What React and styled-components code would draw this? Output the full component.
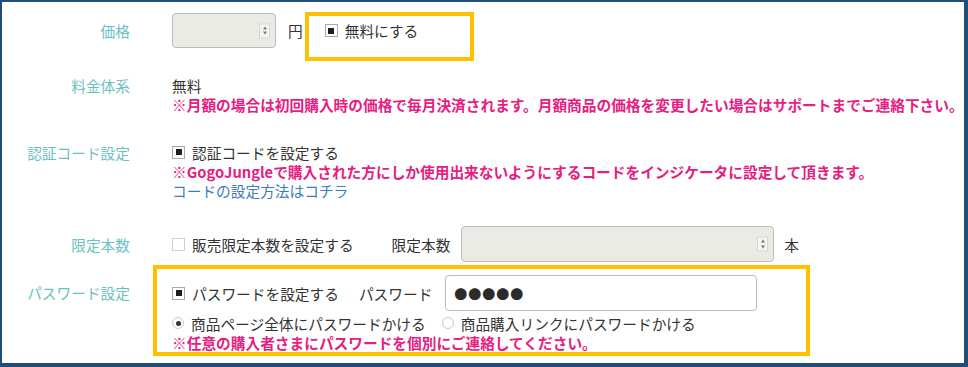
import styled, { createGlobalStyle } from "styled-components";

const GlobalStyle = createGlobalStyle`
  html, body {
    margin: 0;
    padding: 0;
    background: #fff;
  }
  body {
    font-family: "Noto Sans CJK JP", "Noto Sans", sans-serif;
    font-size: 14.7px;
    color: #333;
  }
`;

const Frame = styled.div`
  width: 968px;
  height: 367px;
  box-sizing: border-box;
  border-style: solid;
  border-color: #1f4e79;
  border-width: 2px 4px 4px 2px;
  padding: 10px 0 0 18px;
  display: flex;
  flex-direction: column;
  overflow: hidden;
`;

const Row = styled.div`
  display: grid;
  grid-template-columns: 110px 1fr;
  column-gap: 42px;
  align-items: start;
  margin-top: ${(p) => p.$mt || 0}px;
`;

const Label = styled.div`
  text-align: right;
  color: #6dbfc4;
  line-height: 19px;
  padding-top: ${(p) => p.$pt || 0}px;
  white-space: nowrap;
`;

const Content = styled.div`
  display: flex;
  flex-direction: column;
  line-height: 19px;
  white-space: nowrap;
`;

const Inline = styled.div`
  display: flex;
  align-items: ${(p) => p.$align || "center"};
  line-height: ${(p) => p.$lh || 19}px;
`;

const NumberBox = styled.div`
  position: relative;
  width: ${(p) => p.$w}px;
  height: ${(p) => p.$h}px;
  box-sizing: border-box;
  background: #ebebe5;
  border: 1px solid #bdbdb8;
  border-radius: 4px;
  margin-top: ${(p) => p.$mt || 0}px;
  margin-left: ${(p) => p.$ml || 0}px;
`;

const Spinner = styled.span`
  position: absolute;
  right: 5px;
  top: 50%;
  transform: translateY(-50%);
  width: 11px;
  height: 15px;
  box-sizing: border-box;
  border: 1px solid #d6d6d2;
  background: #f4f4f1;
  display: flex;
  flex-direction: column;
  align-items: center;
  justify-content: space-evenly;

  &::before,
  &::after {
    content: "";
    width: 0;
    height: 0;
    border-left: 2.5px solid transparent;
    border-right: 2.5px solid transparent;
  }
  &::before {
    border-bottom: 3px solid #777;
  }
  &::after {
    border-top: 3px solid #777;
  }
`;

const Unit = styled.span`
  margin-left: ${(p) => p.$ml || 0}px;
  line-height: ${(p) => p.$lh || 19}px;
  color: #333;
`;

const Highlight = styled.div`
  box-sizing: border-box;
  border: 4px solid #ffc000;
  width: ${(p) => p.$w}px;
  height: ${(p) => p.$h}px;
  padding: ${(p) => p.$pad};
  margin-left: ${(p) => p.$ml || 0}px;
  display: flex;
  flex-direction: column;
  align-items: flex-start;
`;

const Check = styled.label`
  display: inline-flex;
  align-items: center;
  gap: 7px;
  color: #333;
  margin-left: ${(p) => p.$ml || 0}px;
`;

const Box = styled.span`
  width: 13px;
  height: 13px;
  box-sizing: border-box;
  border: 1px solid ${(p) => (p.$on ? "#a9a9a9" : "#d0d0d0")};
  background: #fff;
  display: inline-flex;
  align-items: center;
  justify-content: center;

  &::after {
    content: "";
    width: 6px;
    height: 6px;
    background: ${(p) => (p.$on ? "#1e1e1e" : "transparent")};
  }
`;

const Radio = styled.span`
  width: 12px;
  height: 12px;
  box-sizing: border-box;
  border-radius: 50%;
  border: 1px solid #c9c9c9;
  background: #fff;
  display: inline-flex;
  align-items: center;
  justify-content: center;

  &::after {
    content: "";
    width: 5px;
    height: 5px;
    border-radius: 50%;
    background: ${(p) => (p.$on ? "#333" : "transparent")};
  }
`;

const Note = styled.div`
  color: #e5207f;
  font-weight: 700;
  line-height: 19px;
`;

const Link = styled.a`
  color: #3d7cb8;
  text-decoration: none;
`;

const TextField = styled.div`
  width: ${(p) => p.$w}px;
  height: 36px;
  box-sizing: border-box;
  border: 1px solid #bdbdbd;
  border-radius: 4px;
  background: #fff;
  margin-left: ${(p) => p.$ml || 0}px;
  display: flex;
  align-items: center;
  padding-left: 8px;
  color: #2b2b2b;
  font-size: 13px;
  letter-spacing: 1px;
`;

const RadioRow = styled.div`
  display: flex;
  align-items: center;
  line-height: 19px;
  margin-top: 2.5px;
`;

export default function App() {
  return (
    <>
      <GlobalStyle />
      <Frame>
        <Row>
          <Label $pt={8.5}>価格</Label>
          <Inline $align="flex-start">
            <NumberBox $w={104} $h={35} $mt={1}>
              <Spinner />
            </NumberBox>
            <Unit $ml={12} $lh={37}>円</Unit>
            <Highlight $w={169} $h={49} $pad="5px 16px" $ml={2}>
              <Check>
                <Box $on />
                無料にする
              </Check>
            </Highlight>
          </Inline>
        </Row>

        <Row $mt={14.5}>
          <Label>料金体系</Label>
          <Content>
            <span>無料</span>
            <Note>
              ※月額の場合は初回購入時の価格で毎月決済されます。月額商品の価格を変更したい場合はサポートまでご連絡下さい。
            </Note>
          </Content>
        </Row>

        <Row $mt={29}>
          <Label>認証コード設定</Label>
          <Content>
            <Check>
              <Box $on />
              認証コードを設定する
            </Check>
            <Note>
              ※GogoJungleで購入された方にしか使用出来ないようにするコードをインジケータに設定して頂きます。
            </Note>
            <Link href="#">コードの設定方法はコチラ</Link>
          </Content>
        </Row>

        <Row $mt={26.5}>
          <Label $pt={8.5}>限定本数</Label>
          <Inline>
            <Check>
              <Box />
              販売限定本数を設定する
            </Check>
            <Unit $ml={38}>限定本数</Unit>
            <NumberBox $w={313} $h={36} $ml={11}>
              <Spinner />
            </NumberBox>
            <Unit $ml={10}>本</Unit>
          </Inline>
        </Row>

        <Row $mt={3}>
          <Label $pt={17.5}>パスワード設定</Label>
          <Highlight $w={657} $h={91} $pad="6px 15px 0" $ml={-19}>
            <Inline>
              <Check>
                <Box $on />
                パスワードを設定する
              </Check>
              <Unit $ml={20}>パスワード</Unit>
              <TextField $w={312} $ml={13}>●●●●●</TextField>
            </Inline>
            <RadioRow>
              <Check>
                <Radio $on />
                商品ページ全体にパスワードかける
              </Check>
              <Check $ml={16}>
                <Radio />
                商品購入リンクにパスワードかける
              </Check>
            </RadioRow>
            <Note>※任意の購入者さまにパスワードを個別にご連絡してください。</Note>
          </Highlight>
        </Row>
      </Frame>
    </>
  );
}
